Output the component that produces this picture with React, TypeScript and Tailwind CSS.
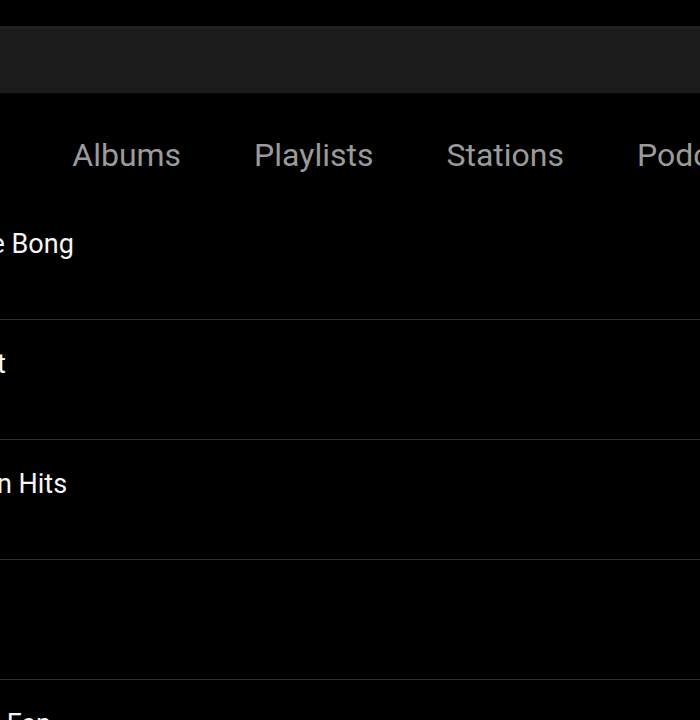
// Library browser – Stations tab list (dark)
const tabs = ['Artists', 'Albums', 'Playlists', 'Stations', 'Podcasts'];

const stations = [
  { id: 1, name: 'House Bong' },
  { id: 2, name: 'Desert' },
  { id: 3, name: 'Golden Hits' },
  { id: 4, name: 'Jazz' },
  { id: 5, name: 'Music Fan' },
];

export default function App() {
  return (
    <div className="w-[700px] h-[720px] overflow-hidden bg-black" style={{ fontFamily: 'Roboto, "Noto Sans", sans-serif' }}>
      {/* Search / toolbar strip */}
      <div className="pt-[26px]">
        <div className="h-[67px] bg-[#1b1b1b] border-t-[3px] border-[#212121]" />
      </div>

      {/* Tabs */}
      <div className="flex gap-[73px] ml-[-95px] pt-[43px] pb-[26px] whitespace-nowrap">
        {tabs.map(t => (
          <span key={t} className="text-[32px] leading-[38px] text-[#9a9a9a]">
            {t}
          </span>
        ))}
      </div>

      {/* List */}
      <div className="ml-[-73px]">
        {stations.map(s => (
          <div key={s.id} className="h-[120px] border-b border-[#303030] pt-[28px] w-[773px]">
            <p className="text-[27px] leading-[32px] text-[#f5f5f5] whitespace-nowrap">{s.name}</p>
          </div>
        ))}
      </div>
    </div>
  );
}
